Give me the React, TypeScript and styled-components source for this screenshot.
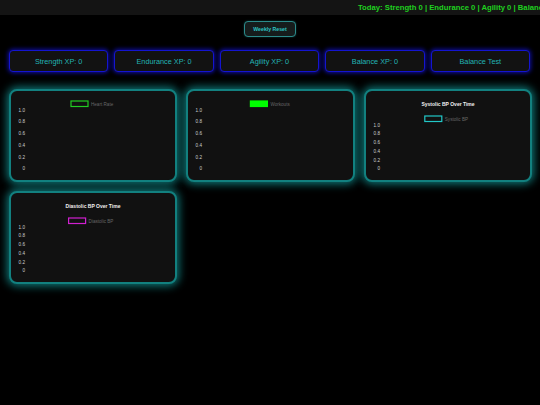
import React from "react";
import styled, { createGlobalStyle } from "styled-components";

const GlobalStyle = createGlobalStyle`
    html, body {
        margin: 0;
        padding: 0;
        background: #000;
    }
    body {
        font-family: "Liberation Sans", Arial, sans-serif;
        width: 540px;
        height: 405px;
        overflow: hidden;
    }
`;

const Page = styled.div`
    display: flex;
    flex-direction: column;
    align-items: stretch;
    width: 540px;
    min-height: 405px;
    background: #000;
`;

const TopBar = styled.div`
    height: 15px;
    background: #141414;
    overflow: hidden;
    white-space: nowrap;
    display: flex;
    align-items: center;
    padding-left: 358px;
    color: #1fd01f;
    font-weight: bold;
    font-size: 7.7px;
`;

const ResetRow = styled.div`
    display: flex;
    justify-content: center;
    margin-top: 6px;
`;

const ResetButton = styled.button`
    width: 52px;
    height: 16px;
    border: 1px solid #2b8a8a;
    border-radius: 4px;
    background: #161c1c;
    color: #2cc4c4;
    font-family: "Liberation Sans", Arial, sans-serif;
    font-weight: bold;
    font-size: 5.2px;
    padding: 0;
    box-shadow: 0 0 2px rgba(40, 160, 160, 0.4);
`;

const XpRow = styled.div`
    display: grid;
    grid-template-columns: repeat(5, 1fr);
    gap: 6px;
    margin: 13px 10px 0 9px;
`;

const XpCard = styled.div`
    height: 20px;
    border: 1.5px solid #1414d0;
    border-radius: 4px;
    background: #121212;
    box-shadow: 0 0 4px 1px rgba(20, 20, 230, 0.7);
    display: flex;
    align-items: center;
    justify-content: center;
    color: #22b4b4;
    font-size: 7.3px;
`;

const ChartGrid = styled.div`
    display: grid;
    grid-template-columns: repeat(3, 1fr);
    gap: 9px;
    margin: 17px 8px 0 9px;
`;

const ChartCard = styled.div`
    height: 89px;
    border: 2px solid #12807f;
    border-radius: 8px;
    background: #111;
    box-shadow: 0 0 8px 2px rgba(20, 170, 170, 0.7);
    overflow: hidden;
`;

const ChartSvg = styled.svg`
    display: block;
    width: 100%;
    height: 100%;
`;

interface ChartProps {
    title?: string;
    label: string;
    color: string;
    filled?: boolean;
}

const ticks = ["1.0", "0.8", "0.6", "0.4", "0.2", "0"];

const Chart: React.FunctionComponent<ChartProps> = ({ title, label, color, filled }) => {
    // positions relative to card inner box (border 2px)
    const legendY = title ? 25 : 10;
    const top = title ? 34 : 19;
    const bottom = 77.5;
    const step = (bottom - top) / 5;
    const cx = 82;
    const textW = label.length * 2.4;
    const boxX = cx - (18 + 2 + textW) / 2;

    return (
        <ChartSvg xmlns="http://www.w3.org/2000/svg">
            {title && (
                <text x={cx} y={15} textAnchor="middle" fill="#f0f0f0" fontSize="5" fontWeight="bold"
                      fontFamily="Liberation Sans, Arial, sans-serif">{title}</text>
            )}
            <rect x={boxX} y={legendY} width={17} height={5.5}
                  fill={filled ? color : "#111"} stroke={color} strokeWidth={1.2} />
            <text x={boxX + 20} y={legendY + 4.5} fill="#666" fontSize="4.6"
                  fontFamily="Liberation Sans, Arial, sans-serif">{label}</text>
            {ticks.map((t, i) => (
                <text key={t} x={14} y={top + i * step + 1.7} textAnchor="end" fill="#cfcfcf" fontSize="4.6"
                      fontFamily="Liberation Sans, Arial, sans-serif">{t}</text>
            ))}
        </ChartSvg>
    );
};

const xp = ["Strength XP: 0", "Endurance XP: 0", "Agility XP: 0", "Balance XP: 0", "Balance Test"];

export default function App() {
    return (
        <>
            <GlobalStyle />
            <Page>
                <TopBar>Today: Strength 0 | Endurance 0 | Agility 0 | Balance 0</TopBar>
                <ResetRow>
                    <ResetButton>Weekly Reset</ResetButton>
                </ResetRow>
                <XpRow>
                    {xp.map(x => <XpCard key={x}>{x}</XpCard>)}
                </XpRow>
                <ChartGrid>
                    <ChartCard><Chart label="Heart Rate" color="#22cc22" /></ChartCard>
                    <ChartCard><Chart label="Workouts" color="#00ff00" filled /></ChartCard>
                    <ChartCard><Chart title="Systolic BP Over Time" label="Systolic BP" color="#22c8c8" /></ChartCard>
                    <ChartCard><Chart title="Diastolic BP Over Time" label="Diastolic BP" color="#d020d0" /></ChartCard>
                </ChartGrid>
            </Page>
        </>
    );
}
